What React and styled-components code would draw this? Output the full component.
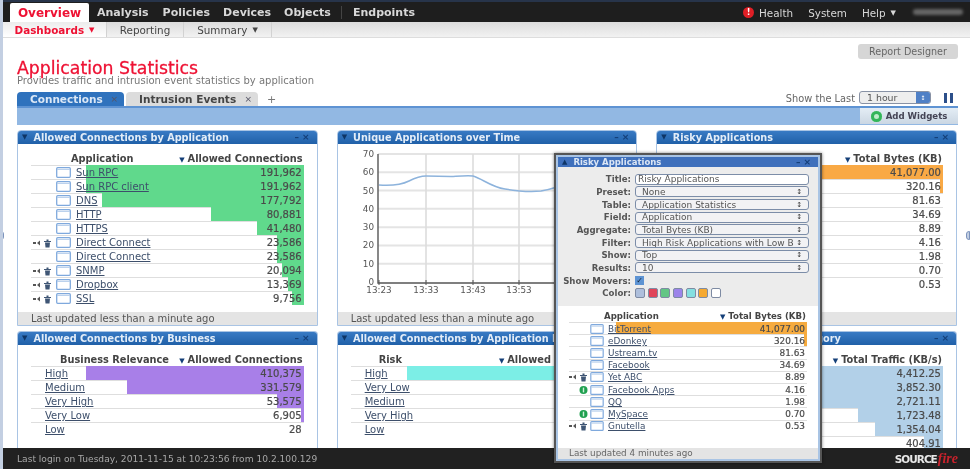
import React from 'react';
import styled, { createGlobalStyle } from 'styled-components';

const Global = createGlobalStyle`
  html, body { margin: 0; padding: 0; background: #fff; }
  body { font-family: "DejaVu Sans", Verdana, sans-serif; font-size: 10px; color: #444; }
  * { box-sizing: border-box; }
`;

const Page = styled.div`
  position: relative; width: 970px; height: 469px; overflow: hidden;
  display: flex; flex-direction: column; background: #fff;
  border-left: 3px solid #c3cfe2; filter: blur(0.6px);
`;
const TopNav = styled.nav`
  height: 22px; flex: none; display: flex; align-items: flex-end; background: #1e1e1e;
  border-top: 2px solid #27344a; padding: 0 7px 0 7px; color: #d8d8d8; font-weight: bold; font-size: 11px;
`;
const NavActive = styled.div`
  width: 79px; height: 19px; background: #fff; color: #ee1133; font-size: 12px; border-radius: 2px 2px 0 0;
  display: flex; align-items: center; justify-content: center; margin-right: 8px;
`;
const NavItem = styled.div`
  height: 19px; display: flex; align-items: center; margin-right: ${p => p.$gap ?? 14}px; white-space: nowrap;
  font-weight: ${p => p.$light ? 'normal' : 'bold'}; font-size: ${p => p.$light ? 10.4 : 11}px;
`;
const NavSep = styled.div`width: 1px; height: 13px; background: #444; margin: 0 11px 3px -1px;`;
const Spacer = styled.div`flex: 1;`;
const Alert = styled.span`
  width: 11px; height: 11px; border-radius: 50%; background: #e01f26; color: #fff; font-size: 8px; font-weight: bold;
  display: flex; align-items: center; justify-content: center; margin: 0 5px 4px 0;
`;
const BlurUser = styled.div`width: 50px; height: 6px; margin: 0 0 7px 17px; background: #666; border-radius: 3px; filter: blur(1.5px);`;
const Caret = styled.span`font-size: 7px; margin-left: 5px;`;

const SubNav = styled.div`
  height: 16px; flex: none; display: flex; background: linear-gradient(#dcdcdc, #f2f2f2);
  border-bottom: 1px solid #ddd; font-size: 10.4px; color: #444;
`;
const SubTab = styled.div`
  width: ${p => p.$w}px; display: flex; align-items: center; justify-content: center; white-space: nowrap;
  background: ${p => p.$active ? 'linear-gradient(#ececec, #fff)' : 'transparent'};
  color: ${p => p.$active ? '#ee1133' : '#444'}; font-weight: ${p => p.$active ? 'bold' : 'normal'};
  border-right: 1px solid #d2d2d2;
`;

const Head = styled.div`
  flex: none; height: 54px; padding: 6px 12px 0 14px; display: flex; justify-content: space-between; align-items: flex-start;
`;
const Title = styled.h1`margin: 16px 0 0; font-size: 17.3px; line-height: 16px; font-weight: normal; color: #ee1133; -webkit-text-stroke: 0.3px #ee1133;`;
const Sub = styled.div`font-size: 10px; line-height: 10px; color: #777;`;
const GrayBtn = styled.div`
  width: 100px; height: 15px; border-radius: 3px; background: #d6d6d6; color: #666; font-size: 9.6px;
  display: flex; align-items: center; justify-content: center;
`;
const TabRow = styled.div`flex: none; height: 14px; padding: 0 17px 0 14px; display: flex; align-items: flex-end;`;
const Tab = styled.div`
  width: ${p => p.$w}px; height: 14px; margin-right: 2px; border-radius: 4px 4px 0 0; font-weight: bold; font-size: 10.5px;
  background: ${p => p.$active ? '#2f72bd' : '#dcdcdc'}; color: ${p => p.$active ? '#dce8f6' : '#444'};
  display: flex; align-items: center; justify-content: space-between; padding: 0 6px 0 13px; white-space: nowrap;
`;
const TabClose = styled.span`font-size: 9px; font-weight: normal; color: #556;`;
const Plus = styled.span`font-size: 11px; color: #777; margin-left: 7px; align-self: center;`;
const ShowLast = styled.div`font-size: 9.8px; color: #666; margin: 0 4px 2px 0; white-space: nowrap;`;
const TimeSelect = styled.div`
  width: 72px; height: 13px; margin-bottom: 2px; border: 1px solid #8892a5; border-radius: 3px; background: #eee; font-size: 9.4px;
  color: #555; display: flex; align-items: center; justify-content: space-between; padding-left: 7px; overflow: hidden;
`;
const SelArrow = styled.span`width: 14px; height: 100%; background: #4f80c6; color: #fff; font-size: 6px; display: flex; align-items: center; justify-content: center;`;
const Pause = styled.div`width: 9px; height: 10px; margin: 0 0 3px 13px; border-left: 3.5px solid #2c4f8a; border-right: 3.5px solid #2c4f8a;`;

const Toolbar = styled.div`
  flex: none; height: 19px; margin: 0 12px 0 14px; background: #92b8e3; border-top: 2px solid #5e93d3;
  display: flex; justify-content: flex-end;
`;
const AddBtn = styled.div`
  width: 98px; height: 16px; background: linear-gradient(#e4edf5, #cbd7e3); font-size: 8.6px; font-weight: bold; color: #445;
  display: flex; align-items: center; justify-content: center; gap: 4px;
`;
const GreenDot = styled.span`width: 11px; height: 11px; border-radius: 50%; background: #33b55a; flex: none; box-shadow: inset 0 0 0 3px #33b55a, inset 0 0 0 9px #bfeccb;`;

const Board = styled.main`
  flex: 1; min-height: 0; overflow: hidden; padding: 5px 13px 0 14px; display: grid;
  grid-template-columns: repeat(3, 1fr); grid-template-rows: 196px 1fr; gap: 5px 19px;
`;
const Widget = styled.section`
  display: flex; flex-direction: column; border: 1px solid #a9c4e4; border-bottom-width: ${p => p.$open ? 0 : 1}px;
  border-radius: 4px 4px 0 0; min-height: 0; overflow: hidden; background: #fff;
`;
const WidgetHead = styled.header`
  flex: none; height: 14px; margin: -1px -1px 0; background: linear-gradient(#3a7cc6, #2060a8); color: #e3edf8;
  font-weight: bold; font-size: 9.7px; display: flex; align-items: center; padding: 0 5px; white-space: nowrap;
`;
const Chev = styled.span`font-size: 7px; color: #0e3566; margin-right: 6px;`;
const HeadBtns = styled.span`margin-left: auto; color: #143f78; font-size: 9px; letter-spacing: 3px;`;
const WidgetBody = styled.div`flex: 1; min-height: 0; padding: 7px 13px 0; overflow: hidden;`;
const ChartBody = styled.div`flex: 1; min-height: 0;`;
const WidgetFoot = styled.footer`
  flex: none; height: 13px; background: #e4e4e4; padding-left: 13px; font-size: 10px; line-height: 13px; color: #555; white-space: nowrap;
`;
const THead = styled.div`
  height: ${p => p.$small ? 13 : 14}px; display: flex; justify-content: space-between; align-items: center; font-weight: bold; color: #444;
  padding: 0 1px 0 ${p => p.$indent}px; font-size: ${p => p.$small ? 8.6 : 9.8}px; white-space: nowrap;
`;
const Sort = styled.span`color: #143f78; font-size: 7px; margin-right: 3px;`;
const Row = styled.div`
  position: relative; height: ${p => p.$small ? 12.2 : 14}px; display: grid; align-items: center;
  grid-template-columns: ${p => p.$plain ? '14px 1fr auto' : `${p.$small ? 21 : 25}px ${p.$small ? 15 : 17}px 1fr auto`};
  border-top: 1px solid #dedede; font-size: ${p => p.$small ? 8.9 : 10}px; color: #555;
`;
const Bar = styled.div`position: absolute; top: -1px; bottom: 0; right: 0; background: ${p => p.$color};`;
const Cell = styled.div`position: relative; display: flex; align-items: center; white-space: nowrap;`;
const ActionCell = styled(Cell)`justify-content: flex-end; padding-right: ${p => p.$pad}px;`;
const Name = styled(Cell)`color: #3d4f6b; text-decoration: underline; padding-left: ${p => p.$plain ? 0 : 3}px;`;
const Value = styled(Cell)`padding-right: 2px; color: #4a4a4a; -webkit-text-stroke: 0.2px #4a4a4a;`;

const Modal = styled.aside`
  position: absolute; left: 551px; top: 153px; width: 268px; height: 310px; display: flex; flex-direction: column; z-index: 3;
  background: #fff; border: 2px solid #555; box-shadow: 0 0 3px rgba(0,0,0,.5), inset 0 0 0 2px #a9c4e4; padding: 2px;
`;
const ModalHead = styled.header`
  height: 10px; flex: none; background: #3f70bc; color: #dbe6f5; font-weight: bold; font-size: 8.5px; display: flex; align-items: center; padding: 0 4px; white-space: nowrap;
`;
const Form = styled.div`
  height: 139px; flex: none; background: #ececec; padding: 6px 9px 0 0; display: grid; grid-template-columns: 73px 1fr;
  grid-auto-rows: 12.67px; column-gap: 4px; align-items: center; font-size: 8.6px; color: #555;
`;
const Label = styled.div`text-align: right; font-weight: bold; white-space: nowrap; justify-self: end;`;
const FieldBox = styled.div`
  height: 11px; border: 1px solid #7c8da8; border-radius: 3px; background: ${p => p.$input ? '#fff' : '#f2f2f4'};
  padding: 0 ${p => p.$input ? 2 : 6}px; display: flex; justify-content: space-between; align-items: center; white-space: nowrap; overflow: hidden; font-size: 9px;
`;
const Updown = styled.span`font-size: 7px; color: #333; flex: none; margin-left: 3px;`;
const FieldText = styled.span`overflow: hidden;`;
const Check = styled.div`width: 9px; height: 9px; background: #5d93d3; color: #123; font-size: 8px; line-height: 9px; text-align: center;`;
const Swatches = styled.div`display: flex; gap: 2.7px;`;
const Swatch = styled.div`width: 10px; height: 10px; border: 1px solid #7e8ba3; border-radius: 2px; background: ${p => p.$c};`;
const ModalTable = styled.div`flex: 1; padding: 3px 11px 0 11px; min-height: 0;`;
const ModalFoot = styled.footer`height: 11px; flex: none; background: #e4e4e4; padding-left: 11px; font-size: 8.8px; line-height: 11px; color: #666;`;

const Handle = styled.div`position: absolute; top: 231px; width: 4px; height: 9px; background: #c3cfe2; border: 1px solid #7c93bc; ${p => p.$right ? 'right: 0; border-radius: 3px 0 0 3px;' : 'left: -3px; border-radius: 0 3px 3px 0;'}`;

const BottomBar = styled.footer`
  flex: none; height: 21px; background: #212121; color: #a8a8a8; font-size: 9.1px; display: flex; align-items: center;
  justify-content: space-between; padding: 0 12px 0 14px; position: relative; z-index: 2; white-space: nowrap;
`;
const Logo = styled.div`font-size: 10.5px; font-weight: bold; color: #e8e8e8; letter-spacing: -1px;`;
const LogoRed = styled.span`color: #c8222c; font-style: italic; font-size: 14px; font-family: "Liberation Serif", serif; letter-spacing: 0; margin-left: 1px;`;

const Monitor = ({ small }) => (
  <svg width={small ? 14 : 15} height={small ? 10 : 11} viewBox="0 0 15 11">
    <rect x=".7" y=".7" width="13.6" height="9.6" rx="1" fill="#fff" stroke="#7fa9dd" strokeWidth="1.3" />
    <line x1="1" y1="2.4" x2="14" y2="2.4" stroke="#b4cdeb" />
  </svg>
);
const Actions = ({ type, small }) => {
  if (type === 'green') return (
    <ActionCell $pad={2}>
      <svg width="9" height="8" viewBox="0 0 9 8"><circle cx="4.5" cy="4" r="4" fill="#20a050" /><rect x="3.8" y="1.6" width="1.4" height="4.8" fill="#cfeeda" /></svg>
    </ActionCell>
  );
  if (type !== 'tool') return <span />;
  return (
    <ActionCell $pad={small ? 1 : 3}>
      <svg width="20" height="10" viewBox="0 0 20 10">
        <rect x="0" y="4" width="3" height="2" fill="#555" /><path d="M4 5l3-2.5v5z" fill="#555" />
        <path d="M11 3h7v1h-7zM12 4.5h5l-.5 5h-4zM13.500 1.500h2v1.500h-2z" fill="#3f5675" />
      </svg>
    </ActionCell>
  );
};

const T = ({ rows, head, indent, valueHead, color, plain, small }) => (
  <div>
    <THead $indent={indent} $small={small}><span>{head}</span><span><Sort>▼</Sort>{valueHead}</span></THead>
    {rows.map(([name, value, bar, act], i) => (
      <Row key={i} $plain={plain} $small={small}>
        {bar > 0 && <Bar $color={color} style={{ width: bar }} />}
        {plain ? <span /> : <Actions type={act} small={small} />}
        {!plain && <Cell><Monitor small={small} /></Cell>}
        <Name $plain={plain}>{name}</Name>
        <Value>{value}</Value>
      </Row>
    ))}
  </div>
);

const apps = [
  ['Sun RPC', '191,962', 218], ['Sun RPC client', '191,962', 218], ['DNS', '177,792', 202], ['HTTP', '80,881', 93],
  ['HTTPS', '41,480', 47], ['Direct Connect', '23,586', 27, 'tool'], ['Direct Connect', '23,586', 27], ['SNMP', '20,094', 22, 'tool'],
  ['Dropbox', '13,369', 16, 'tool'], ['SSL', '9,756', 12, 'tool'],
];
const business = [['High', '410,375', 218], ['Medium', '331,579', 177], ['Very High', '53,575', 27], ['Very Low', '6,905', 3], ['Low', '28', 0]];
const risk = [['High', '', 216], ['Very Low', '', 0], ['Medium', '', 0], ['Very High', '', 0], ['Low', '', 0]];
const risky = [
  ['', '41,077.00', 273], ['', '320.16', 3], ['', '81.63', 0], ['', '34.69', 0], ['', '8.89', 0],
  ['', '4.16', 0], ['', '1.98', 0], ['', '0.70', 0], ['', '0.53', 0],
];
const category = [
  ['', '4,412.25', 273], ['', '3,852.30', 240], ['', '2,721.11', 170], ['', '1,723.48', 85], ['', '1,354.04', 68], ['', '404.91', 19],
];
const modalRows = [
  ['BitTorrent', '41,077.00', 191], ['eDonkey', '320.16', 3], ['Ustream.tv', '81.63', 0], ['Facebook', '34.69', 0], ['Yet ABC', '8.89', 0, 'tool'],
  ['Facebook Apps', '4.16', 0, 'green'], ['QQ', '1.98', 0], ['MySpace', '0.70', 0, 'green'], ['Gnutella', '0.53', 0, 'tool'],
];
const fields = [
  ['Preset:', 'None'], ['Table:', 'Application Statistics'], ['Field:', 'Application'], ['Aggregate:', 'Total Bytes (KB)'],
  ['Filter:', 'High Risk Applications with Low B'], ['Show:', 'Top'], ['Results:', '10'],
];
const colors = ['#aebfdc', '#e0455a', '#63c684', '#9c84ea', '#84dfe0', '#f5a931', '#ffffff'];

const Chart = () => {
  const ys = [0, 10, 20, 30, 40, 50, 60, 70];
  const y = v => 282 - v * 128 / 70;
  const xs = [[378, '13:23'], [425, '13:33'], [472, '13:43'], [518, '13:53']];
  return (
    <svg width="299" height="168" viewBox="337 144 299 168" style={{ display: 'block' }}>
      {ys.slice(1).map(v => <line key={v} x1="377" x2="630" y1={y(v)} y2={y(v)} stroke="#e4e4e4" strokeWidth="2" />)}
      {xs.slice(1).map(([x]) => <line key={x} x1={x} x2={x} y1="154" y2="282" stroke="#dcdcdc" strokeWidth="1.6" />)}
      <path d="M377 154V283H630" fill="none" stroke="#555" strokeWidth="1.4" />
      {ys.map(v => <text key={v} x="373" y={y(v) + 3} textAnchor="end" fontSize="8.8" fill="#555">{v}</text>)}
      {xs.map(([x, l]) => <g key={x}><line x1={x} x2={x} y1="280" y2="285" stroke="#555" /><text x={x} y="293" textAnchor="middle" fontSize="8.8" fill="#555">{l}</text></g>)}
      <path d="M378 185C392 186 400 185 408 181C416 177 420 176 425 176L450 176.5C460 176 466 175.500 472 176C482 179 490 187 504 189C516 191 530 192 540 191C546 190 550 189 556 187" fill="none" stroke="#8db3dc" strokeWidth="1.5" />
    </svg>
  );
};

export default function App() {
  return (
    <>
      <Global />
      <Page>
        <TopNav>
          <NavActive>Overview</NavActive>
          <NavItem>Analysis</NavItem>
          <NavItem $gap={13}>Policies</NavItem>
          <NavItem $gap={13}>Devices</NavItem>
          <NavItem $gap={11}>Objects</NavItem>
          <NavSep />
          <NavItem>Endpoints</NavItem>
          <Spacer />
          <Alert>!</Alert>
          <NavItem $light $gap={15}>Health</NavItem>
          <NavItem $light $gap={15}>System</NavItem>
          <NavItem $light $gap={0}>Help<Caret>▼</Caret></NavItem>
          <BlurUser />
        </TopNav>
        <SubNav>
          <SubTab $active $w={104}>Dashboards<Caret>▼</Caret></SubTab>
          <SubTab $w={77}>Reporting</SubTab>
          <SubTab $w={88}>Summary<Caret>▼</Caret></SubTab>
        </SubNav>
        <Head>
          <div>
            <Title>Application Statistics</Title>
            <Sub>Provides traffic and intrusion event statistics by application</Sub>
          </div>
          <GrayBtn>Report Designer</GrayBtn>
        </Head>
        <TabRow>
          <Tab $active $w={107}>Connections<TabClose>×</TabClose></Tab>
          <Tab $w={132}>Intrusion Events<TabClose>×</TabClose></Tab>
          <Plus>+</Plus>
          <Spacer />
          <ShowLast>Show the Last</ShowLast>
          <TimeSelect>1 hour<SelArrow>↕</SelArrow></TimeSelect>
          <Pause />
        </TabRow>
        <Toolbar>
          <AddBtn><GreenDot />Add Widgets</AddBtn>
        </Toolbar>
        <Board>
          <Widget>
            <WidgetHead><Chev>▼</Chev>Allowed Connections by Application<HeadBtns>–×</HeadBtns></WidgetHead>
            <WidgetBody><T rows={apps} head="Application" indent={40} valueHead="Allowed Connections" color="#60d98c" /></WidgetBody>
            <WidgetFoot>Last updated less than a minute ago</WidgetFoot>
          </Widget>
          <Widget>
            <WidgetHead><Chev>▼</Chev>Unique Applications over Time<HeadBtns>–×</HeadBtns></WidgetHead>
            <ChartBody><Chart /></ChartBody>
            <WidgetFoot>Last updated less than a minute ago</WidgetFoot>
          </Widget>
          <Widget>
            <WidgetHead><Chev>▼</Chev>Risky Applications<HeadBtns>–×</HeadBtns></WidgetHead>
            <WidgetBody><T rows={risky} head="" indent={40} valueHead="Total Bytes (KB)" color="#f9a945" /></WidgetBody>
            <WidgetFoot />
          </Widget>
          <Widget $open>
            <WidgetHead><Chev>▼</Chev>Allowed Connections by Business<HeadBtns>–×</HeadBtns></WidgetHead>
            <WidgetBody><T rows={business} plain head="Business Relevance" indent={29} valueHead="Allowed Connections" color="#a87fe8" /></WidgetBody>
          </Widget>
          <Widget $open>
            <WidgetHead><Chev>▼</Chev>Allowed Connections by Application Risk<HeadBtns>–×</HeadBtns></WidgetHead>
            <WidgetBody><T rows={risk} plain head="Risk" indent={28} valueHead="Allowed Connections" color="#7ceee6" /></WidgetBody>
          </Widget>
          <Widget $open>
            <WidgetHead><Chev>▼</Chev>Traffic by Application Category<HeadBtns>–×</HeadBtns></WidgetHead>
            <WidgetBody><T rows={category} plain head="" indent={28} valueHead="Total Traffic (KB/s)" color="#b2d0e8" /></WidgetBody>
          </Widget>
        </Board>
        <BottomBar>
          <span>Last login on Tuesday, 2011-11-15 at 10:23:56 from 10.2.100.129</span>
          <Logo>SOURCE<LogoRed>fire</LogoRed></Logo>
        </BottomBar>
        <Modal>
          <ModalHead><Chev>▲</Chev>Risky Applications<HeadBtns>–×</HeadBtns></ModalHead>
          <Form>
            <Label>Title:</Label>
            <FieldBox $input><FieldText>Risky Applications</FieldText></FieldBox>
            {fields.map(([l, v]) => (
              <React.Fragment key={l}>
                <Label>{l}</Label>
                <FieldBox><FieldText>{v}</FieldText><Updown>↕</Updown></FieldBox>
              </React.Fragment>
            ))}
            <Label>Show Movers:</Label>
            <Check>✓</Check>
            <Label>Color:</Label>
            <Swatches>{colors.map(c => <Swatch key={c} $c={c} />)}</Swatches>
          </Form>
          <ModalTable><T rows={modalRows} small head="Application" indent={35} valueHead="Total Bytes (KB)" color="#f6ab3f" /></ModalTable>
          <ModalFoot>Last updated 4 minutes ago</ModalFoot>
        </Modal>
        <Handle />
        <Handle $right />
      </Page>
    </>
  );
}
